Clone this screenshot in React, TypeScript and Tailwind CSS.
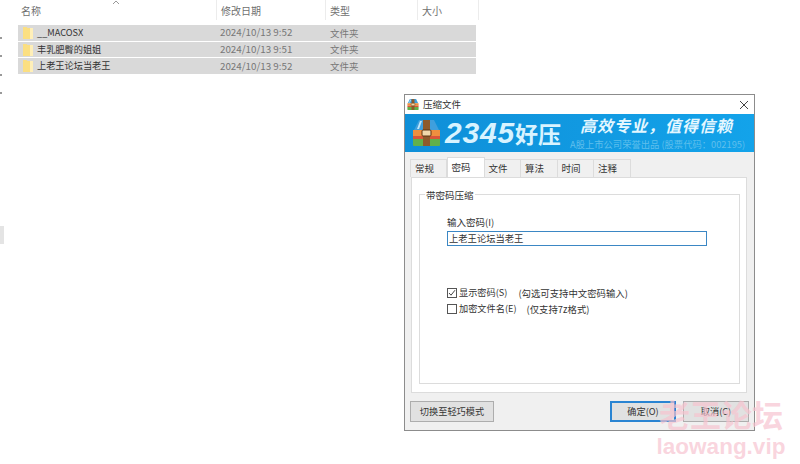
import React from 'react';

const FONT = '"Noto Sans CJK SC", "Liberation Sans", sans-serif';

const rows = [
  { name: '__MACOSX', date: '2024/10/13 9:52' },
  { name: '丰乳肥臀的姐姐', date: '2024/10/13 9:51' },
  { name: '上老王论坛当老王', date: '2024/10/13 9:52' },
];

const tabs = ['常规', '密码', '文件', '算法', '时间', '注释'];

const FolderIcon = () => (
  <svg width="10" height="12" viewBox="0 0 10 12" className="shrink-0">
    <path d="M0 0h3.5l1 1H10v11H0z" fill="#fbdf82" />
    <path d="M7 1h3v11H7z" fill="#ffefb8" />
  </svg>
);

const ArchiveIcon = ({ width, height }: { width: number; height: number }) => (
  <svg width={width} height={height} viewBox="0 0 29 26" className="shrink-0">
    <path d="M7 0h15l5 10H2z" fill="#3f9fdd" />
    <path d="M8 1h2L7 9H5z" fill="#bfe6fb" />
    <path d="M1 10h27v6H1z" fill="#ef8f3f" />
    <path d="M1 16h27v3H1z" fill="#d9563a" />
    <path d="M1 19h27v6q0 1-1 1H2q-1 0-1-1z" fill="#62b04a" />
    <rect x="11" y="0" width="7" height="26" fill="#8f5a2b" />
    <rect x="10" y="10" width="9" height="6" rx="1" fill="#f0d7ab" stroke="#5f3513" />
  </svg>
);

const HeaderCell = ({ label, className }: { label: string; className: string }) => (
  <div className={`h-5 flex items-center border-r border-[#ececec] text-[10px] text-[#6f6f6f] ${className}`}>
    {label}
  </div>
);

const Check = ({ checked }: { checked?: boolean }) => (
  <span className="w-[10px] h-[10px] border border-[#555] bg-white flex items-center justify-center shrink-0">
    {checked && (
      <svg width="8" height="8" viewBox="0 0 8 8">
        <path d="M1 4l2 2.2L7 1.2" fill="none" stroke="#444" strokeWidth="1" />
      </svg>
    )}
  </span>
);

const DialogButton = ({ label, className }: { label: string; className: string }) => (
  <button className={`h-[21px] bg-[#e1e1e1] text-[9.2px] text-[#333] ${className}`}>{label}</button>
);

export default function App() {
  return (
    <div className="relative w-[800px] h-[464px] overflow-hidden bg-white" style={{ fontFamily: FONT }}>
      {/* file list */}
      <div className="pl-[18px] w-[479px]">
        <div className="flex">
          <HeaderCell label="名称" className="w-[199px] pl-[3px]" />
          <HeaderCell label="修改日期" className="w-[109px] pl-[4px]" />
          <HeaderCell label="类型" className="w-[92px] pl-[4px]" />
          <HeaderCell label="大小" className="w-[61px] pl-[4px]" />
        </div>
        <div className="mt-[5px] w-[458px] h-[49px] flex flex-col gap-[1px]">
          {rows.map(row => (
            <div key={row.name} className="flex items-center flex-1 bg-[#d9d9d9]">
              <div className="w-[202px] pl-[5px] flex items-center gap-[4px] text-[9.2px] text-[#333]">
                <FolderIcon />
                <span className="whitespace-nowrap">{row.name}</span>
              </div>
              <div className="w-[110px] text-[9.8px] text-[#777]">{row.date}</div>
              <div className="text-[9.5px] text-[#777]">文件夹</div>
            </div>
          ))}
        </div>
      </div>

      {/* sort arrow */}
      <svg width="8" height="4" viewBox="0 0 8 4" className="absolute left-[112px] top-0">
        <path d="M1 4l3-3 3 3" fill="none" stroke="#999" />
      </svg>

      {/* left edge marks */}
      <span className="absolute left-0 top-[37px] w-[2px] h-[2px] bg-[#999]" />
      <span className="absolute left-0 top-[55px] w-[2px] h-[2px] bg-[#999]" />
      <span className="absolute left-0 top-[74px] w-[2px] h-[2px] bg-[#999]" />
      <span className="absolute left-0 top-[92px] w-[2px] h-[2px] bg-[#999]" />
      <span className="absolute left-0 top-[226px] w-[4px] h-[18px] bg-[#e4e4e4]" />

      {/* dialog */}
      <div className="absolute left-[404px] top-[94px] w-[351px] h-[337px] border border-[#8c8c8c] bg-[#f0f0f0] flex flex-col">
        <div className="h-[19px] bg-white flex items-center pl-[2px] pr-[5px] shrink-0">
          <ArchiveIcon width={12} height={11} />
          <span className="ml-[4px] text-[9.5px] text-[#333]">压缩文件</span>
          <svg width="10" height="10" viewBox="0 0 10 10" className="ml-auto">
            <path d="M1 1l8 8M9 1l-8 8" stroke="#444" strokeWidth="1" />
          </svg>
        </div>

        <div className="h-[38px] shrink-0 bg-gradient-to-r from-[#0f8fd8] to-[#13a3ea] flex items-center pl-[7px] relative overflow-hidden">
          <ArchiveIcon width={29} height={26} />
          <span className="ml-[4px] text-[30px] font-black italic text-[#d8f3ff] leading-none tracking-[0.8px]" style={{ fontFamily: '"Liberation Sans", sans-serif' }}>2345</span>
          <span className="text-[23px] font-bold text-[#d8f3ff] leading-none">好压</span>
          <span className="absolute left-[175px] top-[-1px] text-[16px] font-bold italic text-[#e4f7ff] whitespace-nowrap tracking-[1px]">高效专业，值得信赖</span>
          <span className="absolute left-[165px] top-[23px] text-[9.3px] leading-[14px] text-[#5fbfec] whitespace-nowrap">A股上市公司荣誉出品 (股票代码：002195)</span>
        </div>

        <div className="flex pl-[5px] pt-[7px] h-[25px] shrink-0">
          {tabs.map(tab =>
            tab === '密码' ? (
              <div key={tab} className="w-[38px] h-[20px] -mt-[2px] bg-white border border-b-0 border-[#dcdcdc] flex items-center pl-[4px] text-[9.5px] text-[#333] z-10">
                {tab}
              </div>
            ) : (
              <div key={tab} className="w-[36.5px] h-[18px] border border-l-0 first:border-l border-b-0 border-[#dcdcdc] flex items-center pl-[4px] text-[9.5px] text-[#333]">
                {tab}
              </div>
            ),
          )}
        </div>

        <div className="ml-[6px] mr-[7px] h-[216px] bg-white border border-[#dcdcdc] px-[7px] pt-[16px] shrink-0">
          <div className="relative h-[190px] w-[321px] border border-[#dcdcdc] pl-[27px] pt-[20px]">
            <span className="absolute left-[5px] -top-[7px] bg-white px-[1px] text-[9.5px] leading-[14px] text-[#333]">带密码压缩</span>
            <div className="text-[9.5px] leading-[14px] text-[#333]">输入密码(I)</div>
            <div className="mt-[2px] w-[260px] h-[15px] border border-[#3b87c4] flex items-center pl-[1px] text-[9.3px] text-[#333]">
              上老王论坛当老王
            </div>
            <div className="mt-[40px] flex items-center gap-[2px] h-[14px] text-[9.2px] text-[#333]">
              <Check checked />
              <span>显示密码(S)</span>
              <span className="ml-[9px] text-[9.4px]">(勾选可支持中文密码输入)</span>
            </div>
            <div className="mt-[2px] flex items-center gap-[2px] h-[14px] text-[9.2px] text-[#333]">
              <Check />
              <span>加密文件名(E)</span>
              <span className="ml-[8px] text-[9.4px]">(仅支持7z格式)</span>
            </div>
          </div>
        </div>

        <div className="flex pl-[5px] pr-[5px] mt-[8px]">
          <DialogButton label="切换至轻巧模式" className="w-[84px] border border-[#adadad]" />
          <DialogButton label="确定(O)" className="ml-auto w-[66px] border-2 border-[#2a84d2]" />
          <DialogButton label="取消(C)" className="ml-[7px] w-[66px] border border-[#adadad]" />
        </div>
      </div>

      {/* watermark */}
      <div className="absolute left-[657px] top-[394px] w-[128px] flex flex-col items-center text-[#f7c3cf]/70 pointer-events-none">
        <span className="text-[31px] font-bold leading-[40px] whitespace-nowrap">老王论坛</span>
        <span className="text-[22.5px] font-bold leading-[26px] whitespace-nowrap" style={{ fontFamily: '"Liberation Sans", sans-serif' }}>laowang.vip</span>
      </div>
    </div>
  );
}
